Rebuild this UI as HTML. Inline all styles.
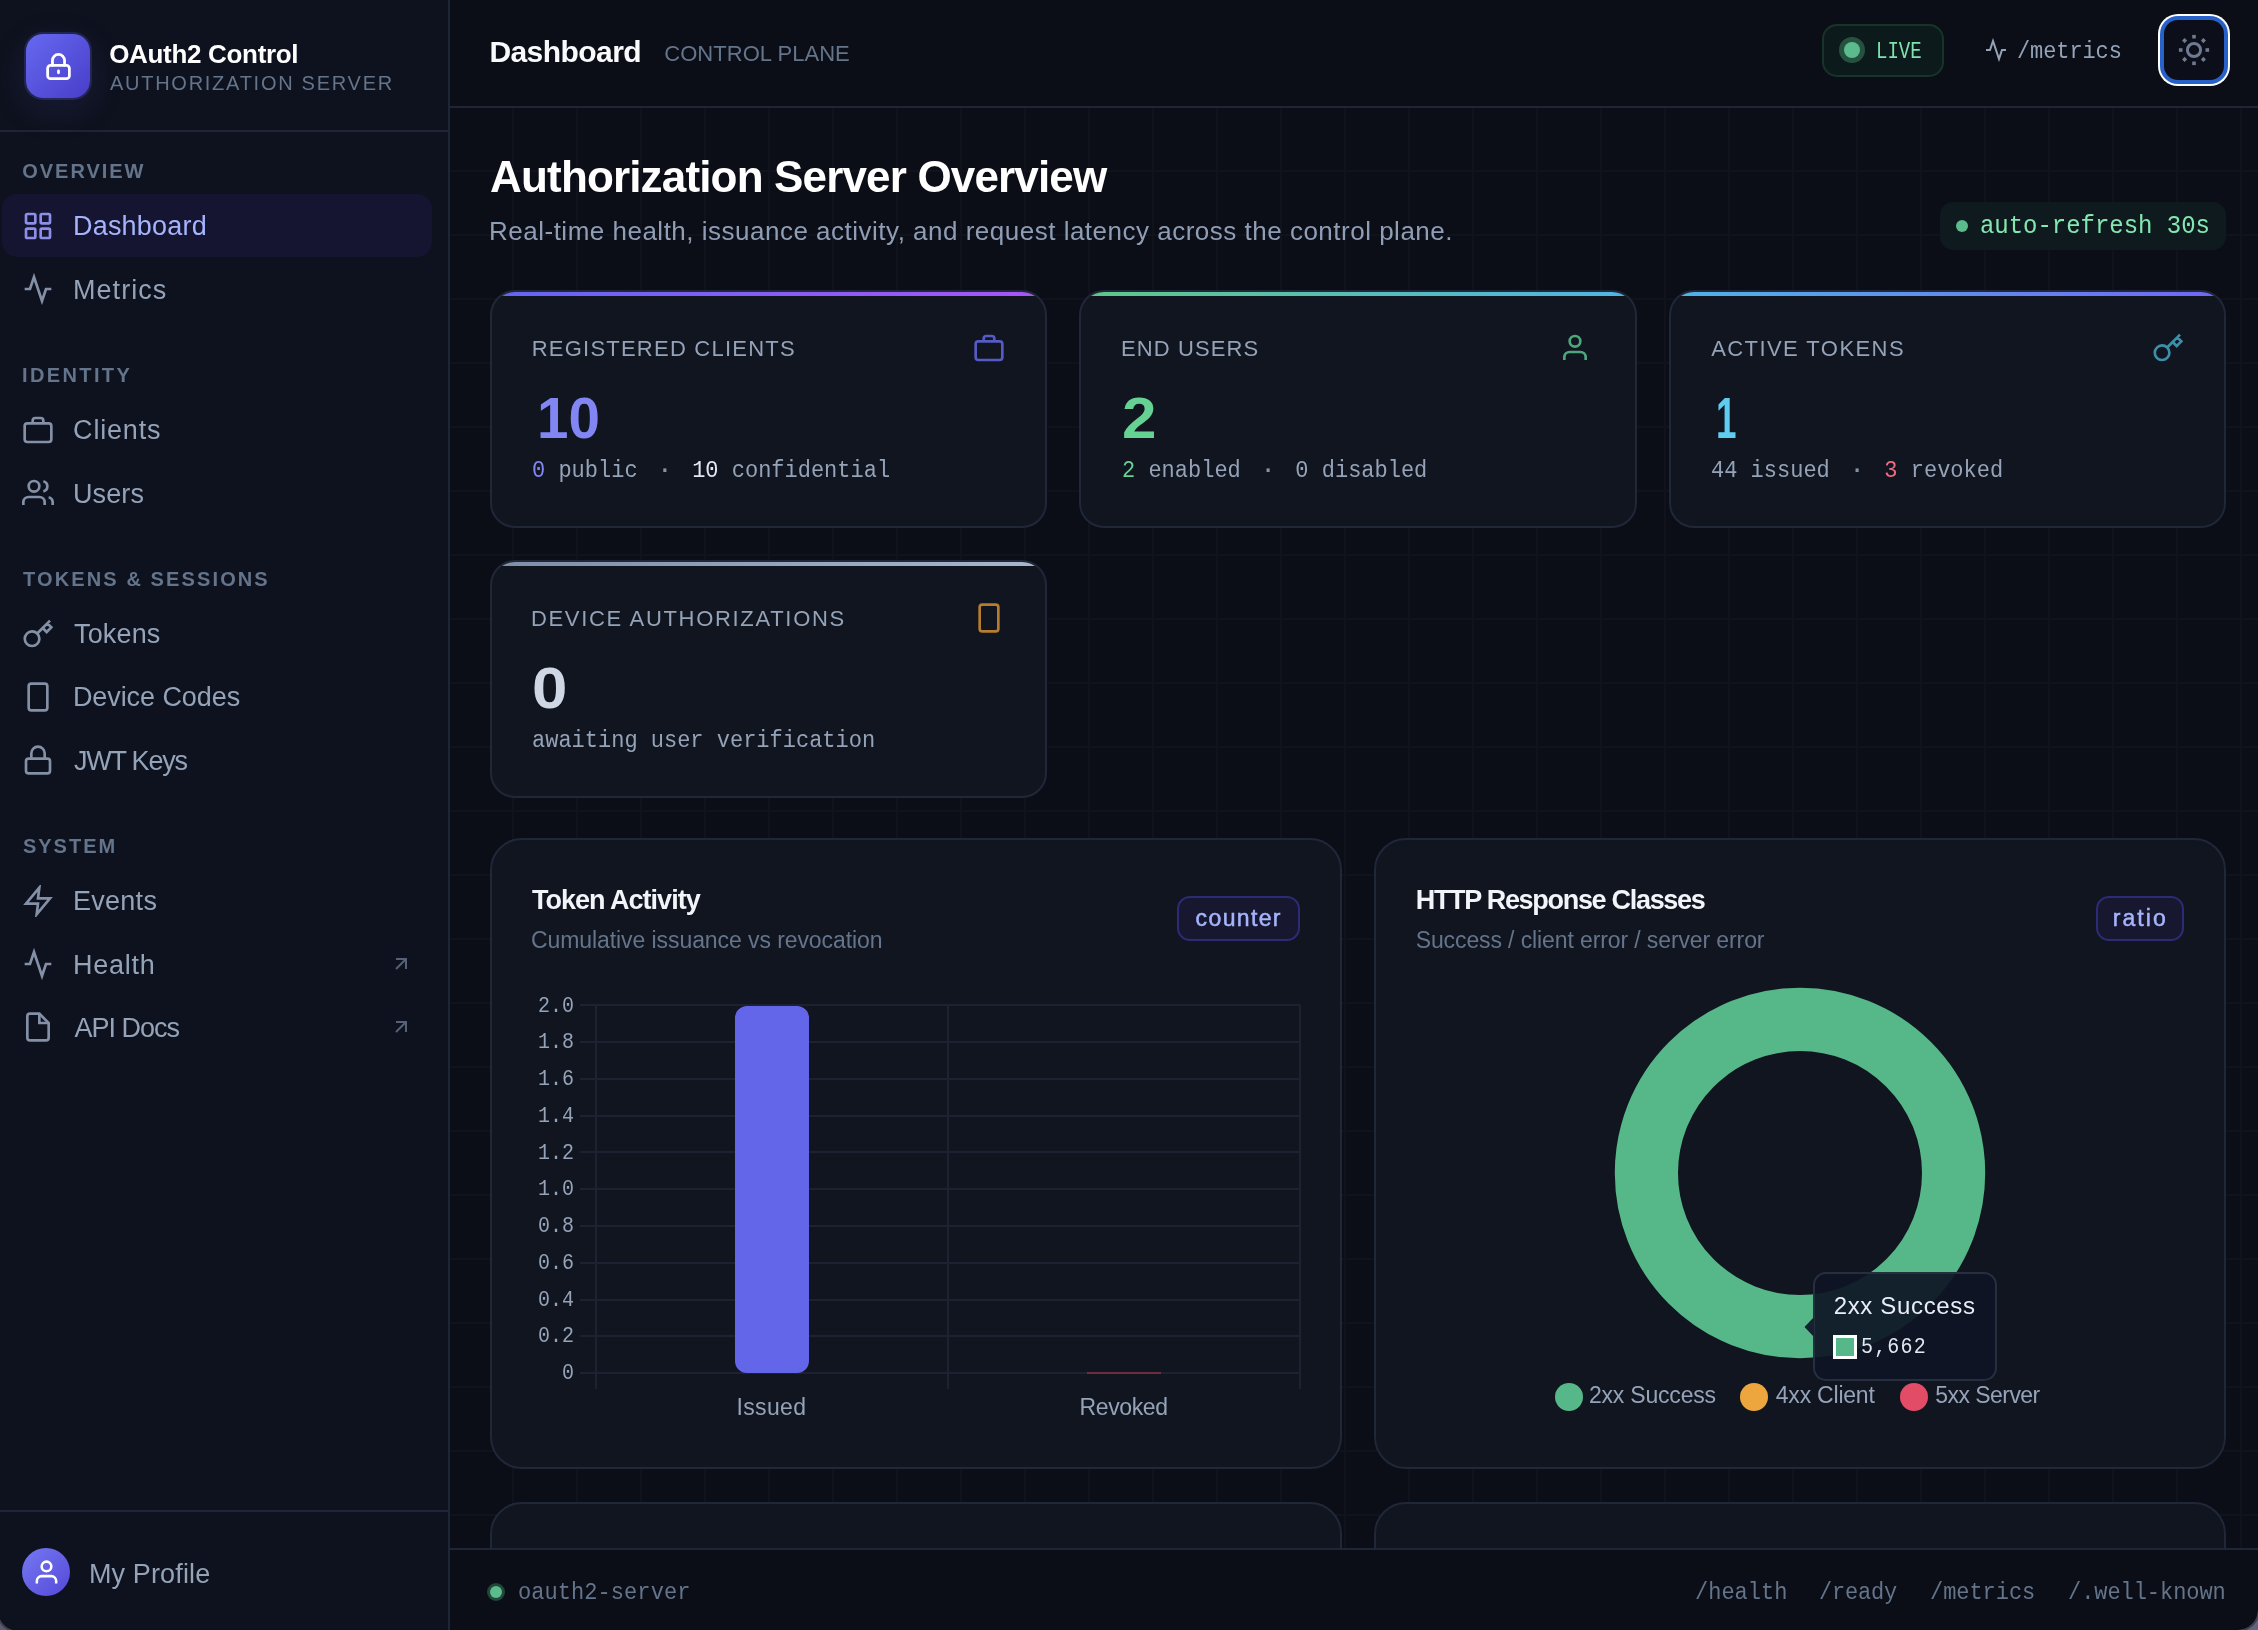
<!DOCTYPE html>
<html lang="en">
<head>
<meta charset="utf-8">
<title>OAuth2 Control — Dashboard</title>
<style>
*{box-sizing:border-box;margin:0;padding:0}
html,body{width:2258px;height:1630px;overflow:hidden;background:#0b0e17}
body{font-family:"Liberation Sans",sans-serif;color:#e2e8f0;position:relative}
#side,#head,#main,#foot{will-change:transform}
.abs{position:absolute;white-space:nowrap}
svg.ic{position:absolute;fill:none;stroke:currentColor;stroke-width:2;stroke-linecap:butt;stroke-linejoin:miter;display:block}
svg.ic.rnd{stroke-linecap:round;stroke-linejoin:round}
#main{position:absolute;left:450px;top:108px;width:1808px;height:1440px;overflow:hidden;background-color:#0b0e17;
 background-image:linear-gradient(#10131c 2px,transparent 2px),linear-gradient(90deg,#10131c 2px,transparent 2px);
 background-size:64px 64px;background-position:62px 62px}
#side{position:absolute;left:0;top:0;width:450px;height:1630px;background:#0e121e;border-right:2px solid #1e2537}
#brand{position:absolute;left:0;top:0;width:448px;height:132px;border-bottom:2px solid #1e2537}
#logo{position:absolute;left:26px;top:34px;width:64px;height:64px;border-radius:17px;background:linear-gradient(135deg,#6669f0 0%,#483dc9 100%);box-shadow:0 0 0 2px rgba(99,102,241,.22),0 10px 36px rgba(99,102,241,.13);color:#fff}
.nav{position:absolute;left:2px;width:430px;height:63px;border-radius:15px}
.nav.on{background:#151531}
#sfoot{position:absolute;left:0;top:1510px;width:448px;height:120px;border-top:2px solid #1e2537}
#avatar{position:absolute;left:22px;top:36px;width:48px;height:48px;border-radius:50%;background:linear-gradient(135deg,#7679f3,#5449d8);color:#fff}
#head{position:absolute;left:450px;top:0;width:1808px;height:108px;background:#0b0e17;border-bottom:2px solid #1e2537}
#foot{position:absolute;left:450px;top:1548px;width:1808px;height:82px;background:#0b0e17;border-top:2px solid #1e2537}
#live{position:absolute;left:1372px;top:24px;width:122px;height:53px;border:2px solid #173429;border-radius:15px;background:#0d1a1b}
#live i{position:absolute;left:15px;top:11px;width:26px;height:26px;border-radius:50%;background:#26513f}
#live i:after{content:"";position:absolute;left:5px;top:5px;width:16px;height:16px;border-radius:50%;background:#5cbb8c}
#themebtn{position:absolute;left:1708px;top:14px;width:72px;height:72px;border-radius:20px;background:#fff}
#themebtn:before{content:"";position:absolute;left:2px;top:2px;right:2px;bottom:2px;border-radius:18px;background:#2862c9}
#themebtn:after{content:"";position:absolute;left:6px;top:6px;right:6px;bottom:6px;border-radius:14px;background:#0c0f19}
#themebtn svg{position:absolute;left:18px;top:18px;z-index:2}
.card{position:absolute;background:#111520;border:2px solid #1f2739;overflow:hidden}
.stat{border-radius:25px}
.stat .bar{position:absolute;left:0;top:0;right:0;height:4px}
.chart{border-radius:32px}
.badge{position:absolute;height:45px;border:2px solid #2d2b75;border-radius:13px;background:#17182f}
.hl{position:absolute;height:2px;background:#1c2232}
.vl{position:absolute;width:2px;background:#1c2232}
.dot{position:absolute;width:28px;height:28px;border-radius:50%}
#tip{position:absolute;border:2px solid #262f40;border-radius:13px;background:rgba(14,20,37,.925)}
.sub b{font-weight:400}
.sub em{font-style:normal;margin:0 8px;color:#8493a8;font-weight:700}
</style>
</head>
<body>
<div id="main">
<div class="abs" style="left:40.1px;top:43.1px;font-size:44px;line-height:52px;color:#ffffff;font-weight:700;letter-spacing:-0.84px">Authorization Server Overview</div>
<div class="abs" style="left:39.0px;top:106.3px;font-size:26px;line-height:34px;color:#8f9db5;letter-spacing:0.50px">Real-time health, issuance activity, and request latency across the control plane.</div>
<div class="abs" style="left:1490px;top:94px;width:286px;height:48px;border-radius:13px;background:#0e1a1d"><i style="position:absolute;left:16px;top:18px;width:12px;height:12px;border-radius:50%;background:#5cbb8c"></i><div class="abs" style="left:39.8px;top:10.2px;font-size:25.68px;line-height:30px;color:#84e6b0;font-family:'Liberation Mono',monospace;letter-spacing:-0.03px;transform:scaleX(0.9346);transform-origin:0 0">auto-refresh 30s</div></div>
<div class="card stat" style="left:40px;top:182px;width:557px;height:238px"><div class="bar" style="background:linear-gradient(90deg,#6366f1,#a855f7)"></div><div class="abs" style="left:39.7px;top:42.6px;font-size:22px;line-height:28px;color:#94a3b8;letter-spacing:1.23px">REGISTERED CLIENTS</div><svg class="ic" style="left:481.2px;top:40.0px;color:#565ac4;stroke-width:2" width="32" height="32" viewBox="0 0 24 24"><rect x="2" y="7" width="20" height="14" rx="2"/><path d="M8 7V5a2 2 0 0 1 2-2h4a2 2 0 0 1 2 2v2"/></svg><div class="abs" style="left:44.6px;top:92.9px;font-size:58px;line-height:66px;color:#8286f3;font-weight:700;transform:scaleX(0.9754);transform-origin:0 0">10</div><div class="abs" style="left:39.9px;top:164.5px;font-size:23.54px;line-height:28px;color:#94a3b8;font-family:'Liberation Mono',monospace;transform:scaleX(0.9346);transform-origin:0 0"><span class="sub"><b style="color:#8286f3">0</b> public <em>·</em> <b style="color:#e2e8f0">10</b> confidential</span></div></div>
<div class="card stat" style="left:629px;top:182px;width:558px;height:238px"><div class="bar" style="background:linear-gradient(90deg,#5fc787,#4fb4e6)"></div><div class="abs" style="left:39.9px;top:42.6px;font-size:22px;line-height:28px;color:#94a3b8;letter-spacing:1.11px">END USERS</div><svg class="ic" style="left:477.9px;top:40.0px;color:#4da77d;stroke-width:2" width="32" height="32" viewBox="0 0 24 24"><path d="M20 21v-2a4 4 0 0 0-4-4H8a4 4 0 0 0-4 4v2"/><circle cx="12" cy="7" r="4"/></svg><div class="abs" style="left:40.5px;top:92.9px;font-size:58px;line-height:66px;color:#65d192;font-weight:700;transform:scaleX(1.0679);transform-origin:0 0">2</div><div class="abs" style="left:40.9px;top:164.5px;font-size:23.54px;line-height:28px;color:#94a3b8;font-family:'Liberation Mono',monospace;transform:scaleX(0.9346);transform-origin:0 0"><span class="sub"><b style="color:#65d192">2</b> enabled <em>·</em> <b>0</b> disabled</span></div></div>
<div class="card stat" style="left:1219px;top:182px;width:557px;height:238px"><div class="bar" style="background:linear-gradient(90deg,#4fb4e6,#7166f5)"></div><div class="abs" style="left:40.2px;top:42.6px;font-size:22px;line-height:28px;color:#94a3b8;letter-spacing:1.43px">ACTIVE TOKENS</div><svg class="ic" style="left:480.8px;top:40.0px;color:#3b8fa9;stroke-width:2" width="32" height="32" viewBox="0 0 24 24"><path d="M21 2l-2 2m-7.61 7.61a5.5 5.5 0 1 1-7.778 7.778 5.5 5.5 0 0 1 7.777-7.777zm0 0L15.5 7.5m0 0l3 3L22 7l-3-3m-3.5 3.5L19 4"/></svg><div class="abs" style="left:45.1px;top:92.9px;font-size:58px;line-height:66px;color:#5fcdf0;font-weight:700;transform:scaleX(0.6357);transform-origin:0 0">1</div><div class="abs" style="left:39.8px;top:164.5px;font-size:23.54px;line-height:28px;color:#94a3b8;font-family:'Liberation Mono',monospace;transform:scaleX(0.9346);transform-origin:0 0"><span class="sub"><b>44</b> issued <em>·</em> <b style="color:#ef6b7f">3</b> revoked</span></div></div>
<div class="card stat" style="left:40px;top:452px;width:557px;height:238px"><div class="bar" style="background:linear-gradient(90deg,#7f8ea8,#a9b7cd)"></div><div class="abs" style="left:38.9px;top:42.9px;font-size:22px;line-height:28px;color:#94a3b8;letter-spacing:1.69px">DEVICE AUTHORIZATIONS</div><svg class="ic" style="left:481.1px;top:40.0px;color:#b57d2d;stroke-width:2" width="32" height="32" viewBox="0 0 24 24"><rect x="5" y="2" width="14" height="20" rx="2"/></svg><div class="abs" style="left:40.0px;top:92.8px;font-size:58px;line-height:66px;color:#cfd6e4;font-weight:700;transform:scaleX(1.0964);transform-origin:0 0">0</div><div class="abs" style="left:39.9px;top:164.8px;font-size:23.54px;line-height:28px;color:#94a3b8;font-family:'Liberation Mono',monospace;transform:scaleX(0.9346);transform-origin:0 0"><span class="sub">awaiting user verification</span></div></div>
<div class="card chart" style="left:40px;top:730px;width:852px;height:631px">
<div class="abs" style="left:40.0px;top:42.0px;font-size:27px;line-height:36px;color:#f1f5f9;font-weight:700;letter-spacing:-0.99px">Token Activity</div>
<div class="abs" style="left:39.0px;top:84.5px;font-size:23px;line-height:30px;color:#64748b;letter-spacing:-0.08px">Cumulative issuance vs revocation</div>
<div class="badge" style="left:685px;top:56px;width:123px"></div>
<div class="abs" style="left:703.6px;top:63.2px;font-size:23px;line-height:30px;color:#a5b4fc;letter-spacing:1.37px;-webkit-text-stroke:0.5px #a5b4fc">counter</div>
<div class="hl" style="left:88px;top:164.4px;width:720px"></div>
<div class="abs" style="left:45.8px;top:153.5px;font-size:21.4px;line-height:24px;color:#94a3b8;font-family:'Liberation Mono',monospace;transform:scaleX(0.9346);transform-origin:0 0">2.0</div>
<div class="hl" style="left:88px;top:201.2px;width:720px"></div>
<div class="abs" style="left:45.8px;top:190.3px;font-size:21.4px;line-height:24px;color:#94a3b8;font-family:'Liberation Mono',monospace;transform:scaleX(0.9346);transform-origin:0 0">1.8</div>
<div class="hl" style="left:88px;top:237.9px;width:720px"></div>
<div class="abs" style="left:45.8px;top:227.0px;font-size:21.4px;line-height:24px;color:#94a3b8;font-family:'Liberation Mono',monospace;transform:scaleX(0.9346);transform-origin:0 0">1.6</div>
<div class="hl" style="left:88px;top:274.7px;width:720px"></div>
<div class="abs" style="left:45.8px;top:263.8px;font-size:21.4px;line-height:24px;color:#94a3b8;font-family:'Liberation Mono',monospace;transform:scaleX(0.9346);transform-origin:0 0">1.4</div>
<div class="hl" style="left:88px;top:311.4px;width:720px"></div>
<div class="abs" style="left:45.8px;top:300.5px;font-size:21.4px;line-height:24px;color:#94a3b8;font-family:'Liberation Mono',monospace;transform:scaleX(0.9346);transform-origin:0 0">1.2</div>
<div class="hl" style="left:88px;top:348.2px;width:720px"></div>
<div class="abs" style="left:45.8px;top:337.3px;font-size:21.4px;line-height:24px;color:#94a3b8;font-family:'Liberation Mono',monospace;transform:scaleX(0.9346);transform-origin:0 0">1.0</div>
<div class="hl" style="left:88px;top:385.0px;width:720px"></div>
<div class="abs" style="left:45.8px;top:374.1px;font-size:21.4px;line-height:24px;color:#94a3b8;font-family:'Liberation Mono',monospace;transform:scaleX(0.9346);transform-origin:0 0">0.8</div>
<div class="hl" style="left:88px;top:421.7px;width:720px"></div>
<div class="abs" style="left:45.8px;top:410.8px;font-size:21.4px;line-height:24px;color:#94a3b8;font-family:'Liberation Mono',monospace;transform:scaleX(0.9346);transform-origin:0 0">0.6</div>
<div class="hl" style="left:88px;top:458.5px;width:720px"></div>
<div class="abs" style="left:45.8px;top:447.6px;font-size:21.4px;line-height:24px;color:#94a3b8;font-family:'Liberation Mono',monospace;transform:scaleX(0.9346);transform-origin:0 0">0.4</div>
<div class="hl" style="left:88px;top:495.2px;width:720px"></div>
<div class="abs" style="left:45.8px;top:484.3px;font-size:21.4px;line-height:24px;color:#94a3b8;font-family:'Liberation Mono',monospace;transform:scaleX(0.9346);transform-origin:0 0">0.2</div>
<div class="hl" style="left:88px;top:532.0px;width:720px"></div>
<div class="abs" style="left:69.8px;top:521.1px;font-size:21.4px;line-height:24px;color:#94a3b8;font-family:'Liberation Mono',monospace;transform:scaleX(0.9346);transform-origin:0 0">0</div>
<div class="vl" style="left:103px;top:165px;height:384px"></div>
<div class="vl" style="left:455px;top:165px;height:384px"></div>
<div class="vl" style="left:807px;top:165px;height:384px"></div>
<div style="position:absolute;left:243px;top:166px;width:74px;height:367px;border-radius:12px;background:#6466e9"></div>
<div style="position:absolute;left:595px;top:532px;width:74px;height:2px;background:#6e2c40"></div>
<div class="abs" style="left:244.4px;top:552.0px;font-size:23px;line-height:30px;color:#94a3b8;letter-spacing:0.37px">Issued</div>
<div class="abs" style="left:587.5px;top:552.0px;font-size:23px;line-height:30px;color:#94a3b8;letter-spacing:-0.38px">Revoked</div>
</div>
<div class="card chart" style="left:924px;top:730px;width:852px;height:631px">
<div class="abs" style="left:39.7px;top:42.0px;font-size:27px;line-height:36px;color:#f1f5f9;font-weight:700;letter-spacing:-1.30px">HTTP Response Classes</div>
<div class="abs" style="left:39.7px;top:84.5px;font-size:23px;line-height:30px;color:#64748b;letter-spacing:-0.11px">Success / client error / server error</div>
<div class="badge" style="left:720px;top:56px;width:88px"></div>
<div class="abs" style="left:736.8px;top:63.2px;font-size:23px;line-height:30px;color:#a5b4fc;letter-spacing:2.04px;-webkit-text-stroke:0.5px #a5b4fc">ratio</div>
<svg style="position:absolute;left:224px;top:133px" width="400" height="400" viewBox="0 0 400 400"><circle cx="200" cy="200" r="153.6" fill="none" stroke="#56b888" stroke-width="63.2"/></svg>
<div id="tip" style="left:437px;top:432px;width:184px;height:109px"><svg style="position:absolute;left:-11px;top:43px" width="10" height="20" viewBox="0 0 10 20"><path d="M10 0L0.5 10l9.5 10z" fill="#132130"/></svg><div class="abs" style="left:18.7px;top:15.6px;font-size:24px;line-height:32px;color:#e8edf7;letter-spacing:0.66px">2xx Success</div><div style="position:absolute;left:18px;top:61px;width:24px;height:24px;border:3px solid #fff;background:#56b888"></div><div class="abs" style="left:45.7px;top:59.9px;font-size:21.4px;line-height:26px;color:#e2e8f0;font-family:'Liberation Mono',monospace;letter-spacing:1.27px;transform:scaleX(0.9346);transform-origin:0 0">5,662</div></div>
<div class="dot" style="left:178.7px;top:542.7px;background:#56b888"></div>
<div class="abs" style="left:213.0px;top:540.2px;font-size:23px;line-height:30px;color:#94a3b8;letter-spacing:-0.21px">2xx Success</div>
<div class="dot" style="left:364.0px;top:542.7px;background:#eda63e"></div>
<div class="abs" style="left:399.8px;top:540.2px;font-size:23px;line-height:30px;color:#94a3b8;letter-spacing:-0.22px">4xx Client</div>
<div class="dot" style="left:524.0px;top:542.9px;background:#e24c66"></div>
<div class="abs" style="left:559.3px;top:540.2px;font-size:23px;line-height:30px;color:#94a3b8;letter-spacing:-0.55px">5xx Server</div>
</div>
<div class="card chart" style="left:40px;top:1394px;width:852px;height:200px"></div><div class="card chart" style="left:924px;top:1394px;width:852px;height:200px"></div>
</div>
<div id="head">
<div class="abs" style="left:39.4px;top:31.6px;font-size:30px;line-height:40px;color:#f8fafc;font-weight:700;letter-spacing:-0.56px">Dashboard</div>
<div class="abs" style="left:214.2px;top:40.3px;font-size:22px;line-height:28px;color:#64748b;letter-spacing:0.05px">CONTROL PLANE</div>
<div id="live"><i></i><div class="abs" style="left:51.9px;top:9.8px;font-size:24px;line-height:32px;color:#7fe3b0;font-family:'Liberation Mono',monospace;transform:scaleX(0.7934);transform-origin:0 0">LIVE</div></div>
<svg class="ic" style="left:1533.8px;top:38.0px;color:#94a3b8;stroke-width:2" width="24" height="24" viewBox="0 0 24 24"><polyline points="22 12 18 12 15 21 9 3 6 12 2 12"/></svg>
<div class="abs" style="left:1567.1px;top:37.8px;font-size:23.54px;line-height:28px;color:#94a3b8;font-family:'Liberation Mono',monospace;letter-spacing:-0.11px;transform:scaleX(0.9346);transform-origin:0 0">/metrics</div>
<div id="themebtn"><svg width="36" height="36" viewBox="0 0 36 36" fill="#6d7a92"><circle cx="18" cy="18" r="6.6" fill="none" stroke="#6d7a92" stroke-width="3"/><rect x="16.2" y="2.9" width="3.6" height="3.6"/><rect x="16.2" y="29.5" width="3.6" height="3.6"/><rect x="2.9" y="16.2" width="3.6" height="3.6"/><rect x="29.5" y="16.2" width="3.6" height="3.6"/><g transform="rotate(45 18 18)"><rect x="16.2" y="2.9" width="3.6" height="3.6"/><rect x="16.2" y="29.5" width="3.6" height="3.6"/><rect x="2.9" y="16.2" width="3.6" height="3.6"/><rect x="29.5" y="16.2" width="3.6" height="3.6"/></g></svg></div>
</div>
<div id="foot">
<div style="position:absolute;left:37px;top:33px;width:18px;height:18px;border-radius:50%;background:#214737"></div>
<div style="position:absolute;left:40px;top:36px;width:12px;height:12px;border-radius:50%;background:#5cbb8c"></div>
<div class="abs" style="left:68.4px;top:28.9px;font-size:23.54px;line-height:28px;color:#64748b;font-family:'Liberation Mono',monospace;letter-spacing:0.07px;transform:scaleX(0.9346);transform-origin:0 0">oauth2-server</div>
<div class="abs" style="left:1244.7px;top:29.1px;font-size:23.54px;line-height:28px;color:#64748b;font-family:'Liberation Mono',monospace;transform:scaleX(0.9346);transform-origin:0 0">/health</div>
<div class="abs" style="left:1368.9px;top:29.1px;font-size:23.54px;line-height:28px;color:#64748b;font-family:'Liberation Mono',monospace;letter-spacing:-0.20px;transform:scaleX(0.9346);transform-origin:0 0">/ready</div>
<div class="abs" style="left:1480.3px;top:29.1px;font-size:23.54px;line-height:28px;color:#64748b;font-family:'Liberation Mono',monospace;letter-spacing:-0.05px;transform:scaleX(0.9346);transform-origin:0 0">/metrics</div>
<div class="abs" style="left:1617.8px;top:29.1px;font-size:23.54px;line-height:28px;color:#64748b;font-family:'Liberation Mono',monospace;letter-spacing:-0.06px;transform:scaleX(0.9346);transform-origin:0 0">/.well-known</div>
</div>
<div id="side">
<div id="brand">
<div id="logo"><svg class="ic rnd" style="left:17.5px;top:17.5px;stroke-width:2.3" width="29" height="29" viewBox="0 0 24 24"><rect x="3" y="11" width="18" height="11" rx="2.4"/><path d="M7 11V7a5 5 0 0 1 10 0v4"/><path d="M12 15.7v1.5"/></svg></div>
<div class="abs" style="left:109.2px;top:36.9px;font-size:26px;line-height:34px;color:#ffffff;font-weight:700;letter-spacing:-0.32px">OAuth2 Control</div>
<div class="abs" style="left:110.0px;top:69.8px;font-size:20px;line-height:26px;color:#64748b;letter-spacing:1.73px">AUTHORIZATION SERVER</div>
</div>
<div class="abs" style="left:22.3px;top:157.9px;font-size:20px;line-height:26px;color:#64748b;font-weight:700;letter-spacing:1.95px">OVERVIEW</div>
<div class="nav on" style="top:194px"><svg class="ic" style="left:20.0px;top:15.7px;color:#8b8fe8;stroke-width:2" width="32" height="32" viewBox="0 0 24 24"><rect x="3" y="3" width="7" height="7" rx="1"/><rect x="14" y="3" width="7" height="7" rx="1"/><rect x="14" y="14" width="7" height="7" rx="1"/><rect x="3" y="14" width="7" height="7" rx="1"/></svg><div class="abs" style="left:71.0px;top:14.2px;font-size:27px;line-height:36px;color:#a5b4fc;letter-spacing:0.20px">Dashboard</div></div>
<div class="nav" style="top:258px"><svg class="ic" style="left:20.0px;top:15.0px;color:#8390a6;stroke-width:2" width="32" height="32" viewBox="0 0 24 24"><polyline points="22 12 18 12 15 21 9 3 6 12 2 12"/></svg><div class="abs" style="left:71.0px;top:13.5px;font-size:27px;line-height:36px;color:#94a3b8;letter-spacing:1.05px">Metrics</div></div>
<div class="abs" style="left:22.0px;top:362.1px;font-size:20px;line-height:26px;color:#64748b;font-weight:700;letter-spacing:2.38px">IDENTITY</div>
<div class="nav" style="top:398px"><svg class="ic" style="left:20.0px;top:15.9px;color:#8390a6;stroke-width:2" width="32" height="32" viewBox="0 0 24 24"><rect x="2" y="7" width="20" height="14" rx="2"/><path d="M8 7V5a2 2 0 0 1 2-2h4a2 2 0 0 1 2 2v2"/></svg><div class="abs" style="left:71.1px;top:14.4px;font-size:27px;line-height:36px;color:#94a3b8;letter-spacing:0.81px">Clients</div></div>
<div class="nav" style="top:462px"><svg class="ic" style="left:20.0px;top:15.1px;color:#8390a6;stroke-width:2" width="32" height="32" viewBox="0 0 24 24"><path d="M17 21v-2a4 4 0 0 0-4-4H5a4 4 0 0 0-4 4v2"/><circle cx="9" cy="7" r="4"/><path d="M23 21v-2a4 4 0 0 0-3-3.87"/><path d="M16 3.13a4 4 0 0 1 0 7.75"/></svg><div class="abs" style="left:70.9px;top:13.6px;font-size:27px;line-height:36px;color:#94a3b8;letter-spacing:0.15px">Users</div></div>
<div class="abs" style="left:23.0px;top:565.9px;font-size:20px;line-height:26px;color:#64748b;font-weight:700;letter-spacing:2.12px">TOKENS &amp; SESSIONS</div>
<div class="nav" style="top:602px"><svg class="ic" style="left:20.0px;top:15.5px;color:#8390a6;stroke-width:2" width="32" height="32" viewBox="0 0 24 24"><path d="M21 2l-2 2m-7.61 7.61a5.5 5.5 0 1 1-7.778 7.778 5.5 5.5 0 0 1 7.777-7.777zm0 0L15.5 7.5m0 0l3 3L22 7l-3-3m-3.5 3.5L19 4"/></svg><div class="abs" style="left:72.1px;top:14.0px;font-size:27px;line-height:36px;color:#94a3b8;letter-spacing:0.13px">Tokens</div></div>
<div class="nav" style="top:665px"><svg class="ic" style="left:20.0px;top:15.8px;color:#8390a6;stroke-width:2" width="32" height="32" viewBox="0 0 24 24"><rect x="5" y="2" width="14" height="20" rx="2"/></svg><div class="abs" style="left:70.9px;top:14.3px;font-size:27px;line-height:36px;color:#94a3b8;letter-spacing:-0.07px">Device Codes</div></div>
<div class="nav" style="top:729px"><svg class="ic" style="left:20.0px;top:15.1px;color:#8390a6;stroke-width:2" width="32" height="32" viewBox="0 0 24 24"><rect x="3" y="11" width="18" height="11" rx="2"/><path d="M7 11V7a5 5 0 0 1 10 0v4"/></svg><div class="abs" style="left:72.1px;top:13.6px;font-size:27px;line-height:36px;color:#94a3b8;letter-spacing:-1.24px">JWT Keys</div></div>
<div class="abs" style="left:22.9px;top:832.9px;font-size:20px;line-height:26px;color:#64748b;font-weight:700;letter-spacing:2.02px">SYSTEM</div>
<div class="nav" style="top:869px"><svg class="ic" style="left:20.0px;top:15.9px;color:#8390a6;stroke-width:2" width="32" height="32" viewBox="0 0 24 24"><polygon points="13 2 3 14 12 14 11 22 21 10 12 10 13 2"/></svg><div class="abs" style="left:70.9px;top:14.4px;font-size:27px;line-height:36px;color:#94a3b8;letter-spacing:0.29px">Events</div></div>
<div class="nav" style="top:933px"><svg class="ic" style="left:20.0px;top:15.1px;color:#8390a6;stroke-width:2" width="32" height="32" viewBox="0 0 24 24"><polyline points="22 12 18 12 15 21 9 3 6 12 2 12"/></svg><div class="abs" style="left:70.9px;top:13.6px;font-size:27px;line-height:36px;color:#94a3b8;letter-spacing:0.77px">Health</div><svg class="ic" style="left:386.5px;top:18.8px;color:#566177;stroke-width:2" width="24" height="24" viewBox="0 0 24 24"><line x1="7" y1="17" x2="17" y2="7"/><polyline points="7 7 17 7 17 17"/></svg></div>
<div class="nav" style="top:996px"><svg class="ic" style="left:20.0px;top:15.3px;color:#8390a6;stroke-width:2" width="32" height="32" viewBox="0 0 24 24"><path d="M13 2H6a2 2 0 0 0-2 2v16a2 2 0 0 0 2 2h12a2 2 0 0 0 2-2V9z"/><polyline points="13 2 13 9 20 9"/></svg><div class="abs" style="left:72.5px;top:13.8px;font-size:27px;line-height:36px;color:#94a3b8;letter-spacing:-1.02px">API Docs</div><svg class="ic" style="left:386.5px;top:19.0px;color:#566177;stroke-width:2" width="24" height="24" viewBox="0 0 24 24"><line x1="7" y1="17" x2="17" y2="7"/><polyline points="7 7 17 7 17 17"/></svg></div>
<div id="sfoot">
<div id="avatar"><svg class="ic" style="left:9.5px;top:9.6px;stroke-width:2.1" width="29" height="29" viewBox="0 0 24 24"><path d="M20 21v-2a4 4 0 0 0-4-4H8a4 4 0 0 0-4 4v2"/><circle cx="12" cy="7" r="4"/></svg></div>
<div class="abs" style="left:88.9px;top:43.7px;font-size:27px;line-height:36px;color:#94a3b8;letter-spacing:0.14px">My Profile</div>
</div>
</div>
<div style="position:absolute;left:0;top:1611px;width:18px;height:19px;background:radial-gradient(circle at 18px 0px,transparent 19.4px,#3b404c 20px,#3b404c 21.2px,#5d5a72 22.2px)"></div>
<div style="position:absolute;left:2238px;top:1610px;width:20px;height:20px;background:radial-gradient(circle at 0px 0px,transparent 19.4px,#3b404c 20px,#3b404c 21.2px,#63637f 22.2px)"></div>
</body>
</html>
